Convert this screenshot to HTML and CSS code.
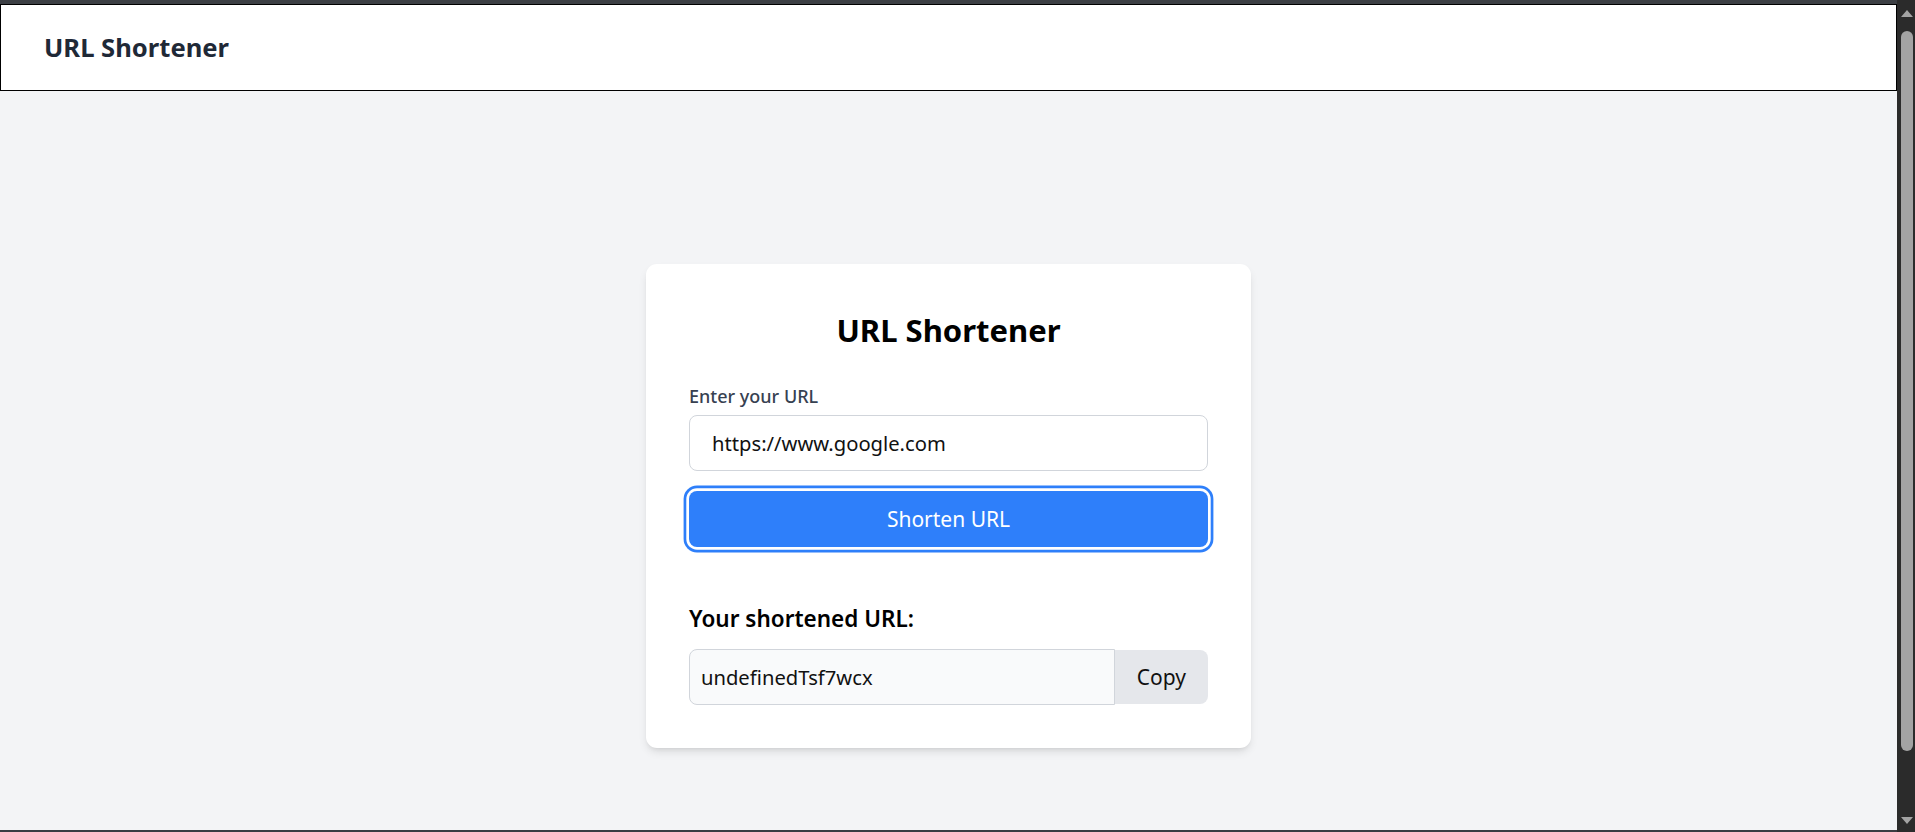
FILE: index.html
```html
<!DOCTYPE html>
<html lang="en">
<head>
<meta charset="utf-8">
<title>URL Shortener</title>
<link rel="stylesheet" href="styles.css">
</head>
<body>
<div class="screen">
  <div class="topbar"></div>
  <header class="header">
    <h1 class="brand">URL Shortener</h1>
  </header>
  <main class="main">
    <section class="card">
      <h2 class="card-title">URL Shortener</h2>
      <form class="form">
        <label class="label" for="url">Enter your URL</label>
        <input class="url-input" id="url" type="text" value="https://www.google.com">
        <button class="submit" type="button">Shorten URL</button>
      </form>
      <div class="result">
        <h3 class="result-title">Your shortened URL:</h3>
        <div class="result-row">
          <input class="result-input" type="text" value="undefinedTsf7wcx" readonly>
          <button class="copy" type="button">Copy</button>
        </div>
      </div>
    </section>
  </main>
  <div class="bottombar"></div>
</div>
<div class="scrollbar">
  <div class="arrow arrow-up"></div>
  <div class="thumb"></div>
  <div class="arrow arrow-down"></div>
</div>
</body>
</html>
```
FILE: styles.css
```css
* { box-sizing: border-box; }
html, body { margin: 0; padding: 0; height: 832px; overflow: hidden; }
body {
  font-family: "Noto Sans", "Open Sans", "Liberation Sans", sans-serif;
  background: #3c3f44;
  color: #000;
}
.screen {
  width: 1897px;
  height: 832px;
  display: flex;
  flex-direction: column;
}
.topbar { height: 4px; background: #3c3f44; flex: none; }
.bottombar { height: 2px; background: #3a3d42; flex: none; }
.header {
  flex: none;
  height: 87px;
  background: #fff;
  border: 1px solid #000;
  display: flex;
  align-items: center;
  padding-left: 43px;
}
.brand {
  margin: 0;
  font-size: 25.6px;
  line-height: 38px;
  font-weight: 700;
  color: #1f2937;
}
.main {
  flex: 1;
  background: #f3f4f6;
  padding-top: 173px;
}
.card {
  width: 605px;
  margin: 0 auto;
  background: #fff;
  border-radius: 11px;
  padding: 43px;
  box-shadow: 0 5px 8px -1px rgba(0,0,0,0.1), 0 3px 5px -3px rgba(0,0,0,0.1);
}
.card-title {
  margin: 0 0 31px;
  padding-top: 2px;
  text-align: center;
  font-size: 31px;
  line-height: 43px;
  font-weight: 700;
}
.form { display: flex; flex-direction: column; }
.label {
  font-size: 18px;
  line-height: 27px;
  font-weight: 500;
  color: #374151;
  margin-bottom: 5px;
}
.url-input {
  height: 56px;
  border: 1px solid #d1d5db;
  border-radius: 8px;
  padding: 0 22px;
  font-family: inherit;
  font-size: 20.2px;
  color: #111;
  background: #fff;
  outline: none;
}
.submit {
  margin-top: 20px;
  height: 56px;
  border: none;
  border-radius: 8px;
  background: #2e7ffa;
  color: #fff;
  font-family: inherit;
  font-size: 21px;
  box-shadow: 0 0 0 2.7px #fff, 0 0 0 5.4px #2e7ffa;
}
.result { margin-top: 53px; }
.result-title {
  margin: 0 0 11px;
  font-size: 22.5px;
  line-height: 38px;
  font-weight: 600;
  color: #000;
}
.result-row { display: flex; align-items: center; }
.result-input {
  flex: 1;
  min-width: 0;
  height: 56px;
  border: 1px solid #d1d5db;
  border-radius: 8px 0 0 8px;
  background: #f9fafb;
  padding: 0 11px;
  font-family: inherit;
  font-size: 20.2px;
  color: #111;
  outline: none;
}
.copy {
  height: 54px;
  border: none;
  border-radius: 0 8px 8px 0;
  background: #e5e7eb;
  padding: 0 22px;
  font-family: inherit;
  font-size: 21px;
  color: #111;
}
.scrollbar {
  position: fixed;
  top: 0;
  right: 0;
  width: 18px;
  height: 832px;
  background: #2b2b2b;
  display: flex;
  flex-direction: column;
  align-items: center;
  padding: 10px 0 8px 2px;
}
.arrow { width: 0; height: 0; border-left: 6px solid transparent; border-right: 6px solid transparent; flex: none; }
.arrow-up { border-bottom: 7px solid #a3a3a3; }
.arrow-down { border-top: 7px solid #a3a3a3; }
.thumb {
  width: 12px;
  margin: 14px 0;
  flex: 1;
  max-height: 720px;
  background: #a3a3a3;
  border-radius: 6px;
}
.thumb + .arrow-down { margin-top: auto; }
```
